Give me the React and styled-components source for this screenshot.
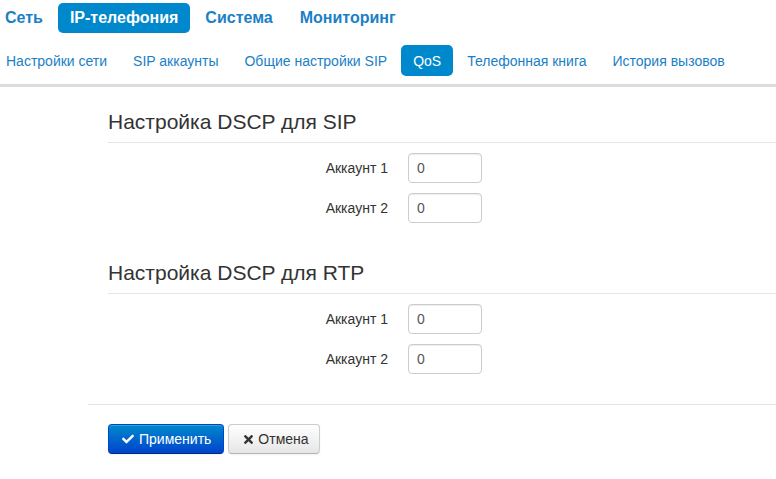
import React from "react";
import styled, { createGlobalStyle } from "styled-components";
import { FaCheck, FaTimes } from "react-icons/fa";

const Global = createGlobalStyle`
  html, body { margin: 0; padding: 0; background: #fff; }
  body { font-family: "Liberation Sans", Arial, sans-serif; font-size: 14px; color: #333; }
`;

const Page = styled.div`
  width: 776px;
  overflow: hidden;
`;

const NavList = styled.ul`
  list-style: none;
  display: flex;
  gap: ${(p) => p.$gap}px;
  margin: ${(p) => p.$top}px 0 0 ${(p) => p.$left}px;
  padding: 0;
`;

const NavItem = styled.li`
  display: flex;
  align-items: center;
  height: ${(p) => p.$h}px;
  padding: 0 12px;
  border-radius: 5px;
  font-size: ${(p) => p.$size}px;
  font-weight: ${(p) => (p.$bold ? 700 : 400)};
  color: ${(p) => (p.$active ? "#fff" : "#1a80c6")};
  background: ${(p) => (p.$active ? "#0088cc" : "transparent")};
  white-space: nowrap;
`;

const Bar = styled.div`
  height: 3px;
  background: #dcdcdc;
  margin-top: 8px;
`;

const Content = styled.div`
  margin-left: 88px;
  padding-top: 15px;
`;

const Fieldset = styled.fieldset`
  border: 0;
  margin: 0;
  padding: 0 0 30px 20px;
`;

const Legend = styled.div`
  height: 40px;
  line-height: 40px;
  font-size: 21px;
  color: #333;
  border-bottom: 1px solid #e5e5e5;
  margin-bottom: 10px;
`;

const Rows = styled.div`
  display: flex;
  flex-direction: column;
  gap: 10px;
`;

const Row = styled.div`
  display: flex;
  align-items: center;
  height: 30px;
`;

const Label = styled.label`
  width: 280px;
  padding-right: 20px;
  text-align: right;
  font-size: 14px;
  color: #333;
`;

const Input = styled.input`
  box-sizing: border-box;
  width: 74px;
  height: 30px;
  padding: 4px 8px;
  border: 1px solid #ccc;
  border-radius: 4px;
  font-family: "Liberation Sans", Arial, sans-serif;
  font-size: 14px;
  color: #555;
  box-shadow: inset 0 1px 1px rgba(0, 0, 0, 0.075);
  outline: none;
`;

const Actions = styled.div`
  display: flex;
  gap: 4px;
  border-top: 1px solid #e5e5e5;
  padding: 19px 20px;
`;

const Button = styled.button`
  display: inline-flex;
  align-items: center;
  gap: ${(p) => (p.$primary ? 5 : 3)}px;
  height: 30px;
  box-sizing: border-box;
  padding: 0 ${(p) => (p.$primary ? 12 : 10)}px 0 13px;
  border-radius: 4px;
  font-family: "Liberation Sans", Arial, sans-serif;
  font-size: 14px;
  cursor: pointer;
  color: ${(p) => (p.$primary ? "#fff" : "#333")};
  border: 1px solid ${(p) => (p.$primary ? "#0044cc" : "#ccc")};
  border-bottom-color: ${(p) => (p.$primary ? "#002a80" : "#b3b3b3")};
  background: ${(p) =>
    p.$primary
      ? "linear-gradient(to bottom, #0088cc, #0044cc)"
      : "linear-gradient(to bottom, #ffffff, #e6e6e6)"};
  box-shadow: inset 0 1px 0 rgba(255, 255, 255, 0.2), 0 1px 2px rgba(0, 0, 0, 0.05);
  svg { font-size: ${(p) => (p.$primary ? 12 : 13)}px; }
`;

const topNav = ["Сеть", "IP-телефония", "Система", "Мониторинг"];
const subNav = [
  "Настройки сети",
  "SIP аккаунты",
  "Общие настройки SIP",
  "QoS",
  "Телефонная книга",
  "История вызовов",
];

const sections = ["Настройка DSCP для SIP", "Настройка DSCP для RTP"];

export default function App() {
  return (
    <Page>
      <Global />
      <NavList $top={3} $gap={3} $left={-7}>
        {topNav.map((t) => (
          <NavItem key={t} $h={30} $size={16} $bold $active={t === "IP-телефония"}>
            {t}
          </NavItem>
        ))}
      </NavList>
      <NavList $top={12} $gap={2} $left={-6}>
        {subNav.map((t) => (
          <NavItem key={t} $h={31} $size={14} $active={t === "QoS"}>
            {t}
          </NavItem>
        ))}
      </NavList>
      <Bar />
      <Content>
        {sections.map((s) => (
          <Fieldset key={s}>
            <Legend>{s}</Legend>
            <Rows>
              {["Аккаунт 1", "Аккаунт 2"].map((a) => (
                <Row key={a}>
                  <Label>{a}</Label>
                  <Input defaultValue="0" />
                </Row>
              ))}
            </Rows>
          </Fieldset>
        ))}
        <Actions>
          <Button $primary>
            <FaCheck />
            Применить
          </Button>
          <Button>
            <FaTimes />
            Отмена
          </Button>
        </Actions>
      </Content>
    </Page>
  );
}
